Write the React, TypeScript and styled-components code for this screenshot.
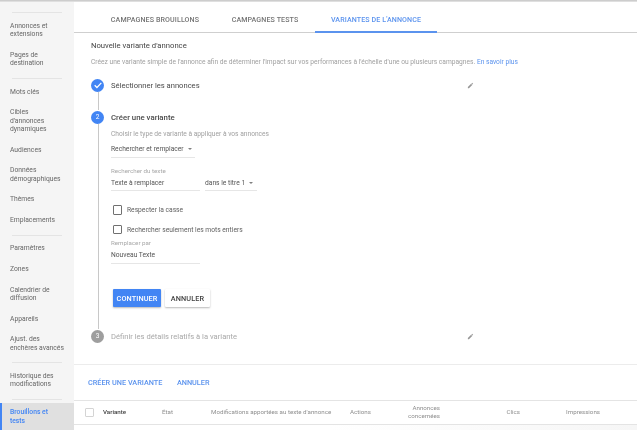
import styled, { createGlobalStyle } from "styled-components";

const GlobalStyle = createGlobalStyle`
    html, body {
        margin: 0;
        padding: 0;
        background: #fff;
    }
    * {
        box-sizing: border-box;
    }
`;

const Page = styled.div`
    width: 637px;
    height: 430px;
    display: flex;
    overflow: hidden;
    position: relative;
    font-family: Roboto, "Liberation Sans", sans-serif;
    color: #424242;
    background: #fff;
    filter: blur(0.35px);
`;

const TopShadow = styled.div`
    position: absolute;
    top: 0;
    left: 0;
    right: 0;
    height: 2px;
    background: linear-gradient(#c4c4c4, #e8e8e8);
`;

const Sidebar = styled.nav`
    width: 74px;
    height: 430px;
    flex-shrink: 0;
    background: #f5f5f5;
    padding-top: 12px;
    overflow: hidden;
`;

const SideRule = styled.div`
    height: 1px;
    background: #e4e4e4;
    margin: 0 12px 2.65px 12px;
`;

const SideGroup = styled.div`
    margin-bottom: 4.2px;
`;

const SideItem = styled.div<{ $active?: boolean }>`
    font-size: 6.75px;
    line-height: 8.3px;
    white-space: pre;
    padding: ${(p) => (p.$active ? "5.5px 0 6px 8px" : "6.2px 0 6.2px 10px")};
    margin-top: ${(p) => (p.$active ? "1.35px" : "0")};
    color: ${(p) => (p.$active ? "#4285f4" : "#666")};
    font-weight: ${(p) => (p.$active ? 500 : 400)};
    background: ${(p) => (p.$active ? "#e0e0e0" : "transparent")};
    border-left: ${(p) => (p.$active ? "2px solid #4285f4" : "none")};
`;

const Main = styled.main`
    flex: 1;
    min-width: 0;
    display: flex;
    flex-direction: column;
`;

const Tabs = styled.div`
    height: 33px;
    flex-shrink: 0;
    display: flex;
    border-bottom: 1px solid #cfcfcf;
    padding-left: 21px;
`;

const Tab = styled.div<{ $active?: boolean; $width: number }>`
    width: ${(p) => p.$width}px;
    height: 33px;
    display: flex;
    align-items: center;
    justify-content: center;
    padding-top: ${(p) => (p.$active ? "7px" : "5px")};
    font-size: 7.1px;
    font-weight: 500;
    letter-spacing: 0.1px;
    color: ${(p) => (p.$active ? "#5b93ee" : "#757575")};
    border-bottom: ${(p) => (p.$active ? "2px solid #5b93ee" : "none")};
`;

const Content = styled.section`
    height: 332px;
    flex-shrink: 0;
    padding: 8px 0 0 17px;
    border-bottom: 1px solid #ececec;
`;

const Heading = styled.h2`
    margin: 0;
    font-size: 7.7px;
    line-height: 10px;
    font-weight: 400;
    color: #444;
`;

const Description = styled.p`
    margin: 5.5px 0 0;
    font-size: 6.65px;
    line-height: 10px;
    color: #a0a0a0;
`;

const Link = styled.a`
    color: #5b93ee;
`;

const Steps = styled.div`
    margin-top: 11.5px;
`;

const StepRow = styled.div`
    display: flex;
    align-items: center;
    gap: 7px;
    height: 14px;
    padding-right: 163px;
`;

const Circle = styled.div<{ $color: string }>`
    width: 13px;
    height: 13px;
    border-radius: 50%;
    flex-shrink: 0;
    background: ${(p) => p.$color};
    color: #fff;
    font-size: 6.6px;
    display: flex;
    align-items: center;
    justify-content: center;
`;

const StepTitle = styled.div<{ $tone: "done" | "active" | "muted" }>`
    flex: 1;
    font-size: ${(p) => (p.$tone === "active" ? "7.8px" : "7.6px")};
    font-weight: ${(p) => (p.$tone === "active" ? 500 : 400)};
    color: ${(p) => (p.$tone === "muted" ? "#a8a8a8" : "#4a4a4a")};
`;

const Rail = styled.div<{ $height: number }>`
    margin-left: 6.5px;
    border-left: 1px solid #c8c8c8;
    padding-left: 12.5px;
    height: ${(p) => p.$height}px;
`;

const Hint = styled.div`
    font-size: 6.65px;
    line-height: 10px;
    color: #a0a0a0;
    padding: 5px 0 3px;
`;

const FieldRow = styled.div`
    display: flex;
    gap: 5px;
`;

const Field = styled.div<{ $width: number }>`
    width: ${(p) => p.$width}px;
    height: 15.5px;
    display: flex;
    align-items: center;
    gap: 4px;
    font-size: 6.7px;
    white-space: nowrap;
    color: #555;
    border-bottom: 1px solid #e6e6e6;
`;

const Caret = styled.span`
    width: 0;
    height: 0;
    border-left: 2.4px solid transparent;
    border-right: 2.4px solid transparent;
    border-top: 2.4px solid #808080;
`;

const SmallLabel = styled.div<{ $top: number }>`
    margin: ${(p) => p.$top}px 0 1px;
    font-size: 6.2px;
    line-height: 8px;
    color: #a8a8a8;
`;

const CheckRow = styled.label<{ $top: number }>`
    display: flex;
    align-items: center;
    gap: 5px;
    margin-top: ${(p) => p.$top}px;
    padding-left: 1.5px;
    height: 12px;
    font-size: 6.7px;
    color: #5f5f5f;
`;

const Box = styled.span`
    width: 9.5px;
    height: 9.5px;
    border: 1px solid #707070;
    border-radius: 1px;
    flex-shrink: 0;
`;

const Buttons = styled.div`
    display: flex;
    gap: 4px;
    margin: 25.5px 0 0 2px;
`;

const Button = styled.button<{ $primary?: boolean }>`
    height: 18px;
    width: ${(p) => (p.$primary ? 48 : 45)}px;
    padding: 0;
    border: none;
    border-radius: 1px;
    font-family: inherit;
    font-size: 7.3px;
    font-weight: 500;
    letter-spacing: 0.1px;
    color: ${(p) => (p.$primary ? "#fff" : "#424242")};
    background: ${(p) => (p.$primary ? "#4285f4" : "#fff")};
    box-shadow: 0 1px 2px rgba(0, 0, 0, 0.28);
`;

const Actions = styled.div`
    height: 36px;
    flex-shrink: 0;
    display: flex;
    align-items: center;
    gap: 14.5px;
    padding-left: 14px;
    border-bottom: 1px solid #e4e4e4;
    font-size: 7.3px;
    font-weight: 500;
    color: #5b93ee;
`;

const TableHead = styled.div`
    height: 24px;
    flex-shrink: 0;
    display: grid;
    grid-template-columns: 18px 59px 49px 139px 58px 32px 80px 80px;
    align-items: center;
    padding-left: 11px;
    border-bottom: 1px solid #e4e4e4;
    font-size: 6.2px;
    line-height: 7.6px;
    color: #8f8f8f;
`;

const HeadBox = styled.span`
    width: 8.5px;
    height: 8.5px;
    border: 1px solid #d4d4d4;
    border-radius: 1px;
`;

const StrongHead = styled.div`
    font-weight: 500;
    color: #444;
`;

const RightHead = styled.div`
    text-align: right;
`;

const EmptyRow = styled.div`
    flex: 1;
    background: linear-gradient(to right, #fff 45%, #f6f6f6);
`;

const Pencil = () => (
    <svg width="7" height="7" viewBox="0 0 24 24" fill="#969696">
        <path d="M3 17.25V21h3.75L17.81 9.94l-3.75-3.75L3 17.25zM20.71 7.04a1 1 0 0 0 0-1.41l-2.34-2.34a1 1 0 0 0-1.41 0l-1.83 1.83 3.75 3.75 1.83-1.83z" />
    </svg>
);

const Check = () => (
    <svg width="10" height="10" viewBox="0 0 24 24" fill="none" stroke="#fff" strokeWidth="3">
        <path d="M4 12.5l5.5 5.5L20 7" />
    </svg>
);

const sideGroups = [
    ["Annonces et\nextensions", "Pages de\ndestination"],
    ["Mots clés", "Cibles\nd'annonces\ndynamiques", "Audiences", "Données\ndémographiques", "Thèmes", "Emplacements"],
    ["Paramètres", "Zones", "Calendrier de\ndiffusion", "Appareils", "Ajust. des\nenchères avancés"],
    ["Historique des\nmodifications"],
];

const App = () => {
    return (
        <Page>
            <GlobalStyle />
            <Sidebar>
                {sideGroups.map((group) => (
                    <div key={group[0]}>
                        <SideRule />
                        <SideGroup>
                            {group.map((item) => (
                                <SideItem key={item}>{item}</SideItem>
                            ))}
                        </SideGroup>
                    </div>
                ))}
                <SideRule />
                <SideItem $active>{"Brouillons et\ntests"}</SideItem>
            </Sidebar>
            <Main>
                <Tabs>
                    <Tab $width={120}>CAMPAGNES BROUILLONS</Tab>
                    <Tab $width={100}>CAMPAGNES TESTS</Tab>
                    <Tab $width={122} $active>
                        VARIANTES DE L'ANNONCE
                    </Tab>
                </Tabs>
                <Content>
                    <Heading>Nouvelle variante d'annonce</Heading>
                    <Description>
                        Créez une variante simple de l'annonce afin de déterminer l'impact sur vos performances à
                        l'échelle d'une ou plusieurs campagnes. <Link>En savoir plus</Link>
                    </Description>
                    <Steps>
                        <StepRow>
                            <Circle $color="#4285f4">
                                <Check />
                            </Circle>
                            <StepTitle $tone="done">Sélectionner les annonces</StepTitle>
                            <Pencil />
                        </StepRow>
                        <Rail $height={18} />
                        <StepRow>
                            <Circle $color="#4285f4">2</Circle>
                            <StepTitle $tone="active">Créer une variante</StepTitle>
                        </StepRow>
                        <Rail $height={205}>
                            <Hint>Choisir le type de variante à appliquer à vos annonces</Hint>
                            <Field $width={84}>
                                Rechercher et remplacer <Caret />
                            </Field>
                            <SmallLabel $top={9}>Rechercher du texte</SmallLabel>
                            <FieldRow>
                                <Field $width={89}>Texte à remplacer</Field>
                                <Field $width={52}>
                                    dans le titre 1 <Caret />
                                </Field>
                            </FieldRow>
                            <CheckRow $top={13}>
                                <Box />
                                Respecter la casse
                            </CheckRow>
                            <CheckRow $top={7.5}>
                                <Box />
                                Rechercher seulement les mots entiers
                            </CheckRow>
                            <SmallLabel $top={3.5}>Remplacer par</SmallLabel>
                            <Field $width={89}>Nouveau Texte</Field>
                            <Buttons>
                                <Button $primary>CONTINUER</Button>
                                <Button>ANNULER</Button>
                            </Buttons>
                        </Rail>
                        <StepRow>
                            <Circle $color="#9e9e9e">3</Circle>
                            <StepTitle $tone="muted">Définir les détails relatifs à la variante</StepTitle>
                            <Pencil />
                        </StepRow>
                    </Steps>
                </Content>
                <Actions>
                    <span>CRÉER UNE VARIANTE</span>
                    <span>ANNULER</span>
                </Actions>
                <TableHead>
                    <HeadBox />
                    <StrongHead>Variante</StrongHead>
                    <div>État</div>
                    <div>Modifications apportées au texte d'annonce</div>
                    <div>Actions</div>
                    <RightHead>Annonces concernées</RightHead>
                    <RightHead>Clics</RightHead>
                    <RightHead>Impressions</RightHead>
                </TableHead>
                <EmptyRow />
            </Main>
            <TopShadow />
        </Page>
    );
};

export default App;
